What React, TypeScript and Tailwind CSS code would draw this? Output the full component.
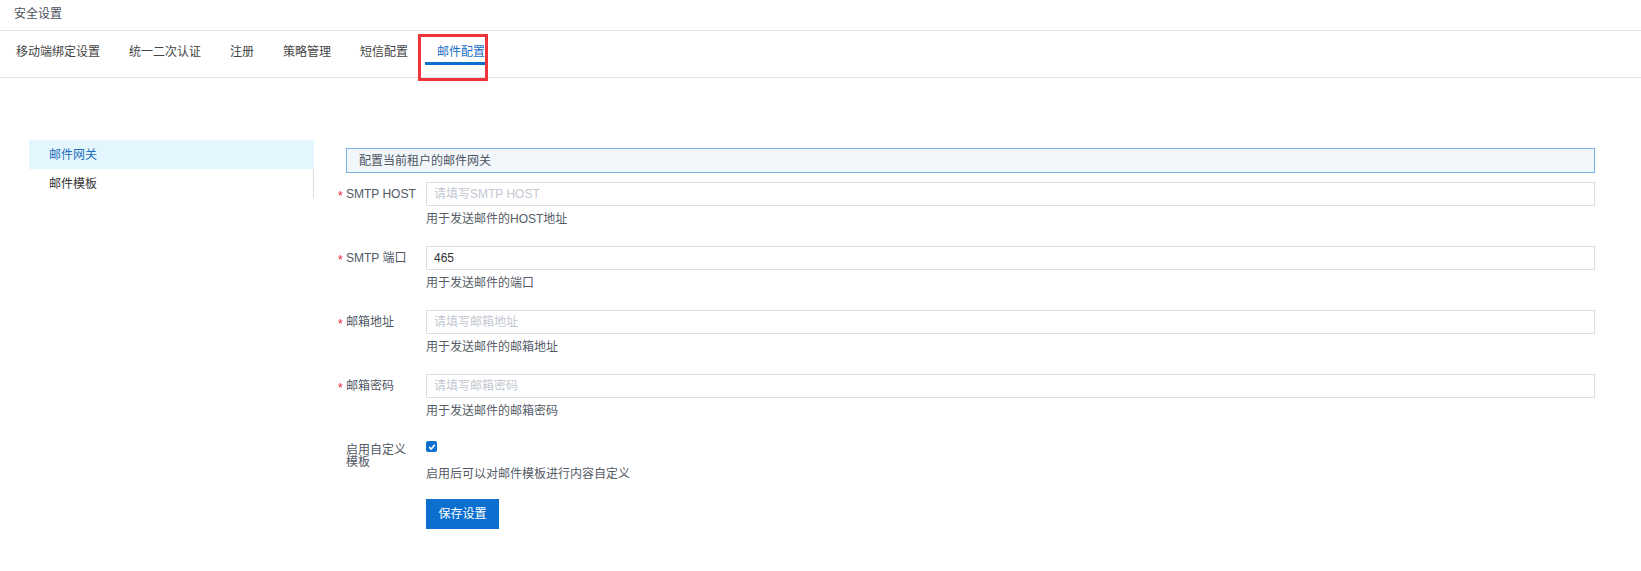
import { useState } from 'react';

const tabs = ['移动端绑定设置', '统一二次认证', '注册', '策略管理', '短信配置', '邮件配置'];

interface Field {
  label: string;
  placeholder: string;
  value?: string;
  help: string;
}

const fields: Field[] = [
  { label: 'SMTP HOST', placeholder: '请填写SMTP HOST', help: '用于发送邮件的HOST地址' },
  { label: 'SMTP 端口', placeholder: '', value: '465', help: '用于发送邮件的端口' },
  { label: '邮箱地址', placeholder: '请填写邮箱地址', help: '用于发送邮件的邮箱地址' },
  { label: '邮箱密码', placeholder: '请填写邮箱密码', help: '用于发送邮件的邮箱密码' },
];

function FormRow({ field }: { field: Field }) {
  return (
    <div className="flex">
      {/* label column with required mark */}
      <div className="w-[88px] shrink-0 flex items-center h-[24px]">
        <span className="w-[8px] text-[#f5222d] text-[12px] leading-none pt-[3px]">*</span>
        <span className="text-[#505763]">{field.label}</span>
      </div>
      <div className="flex-1">
        <input
          className="block w-full h-[24px] border border-[#d9dde6] px-[7px] text-[12px] text-[#333] placeholder:text-[#c3c8d1] outline-none"
          placeholder={field.placeholder}
          defaultValue={field.value}
        />
        <div className="mt-[4px] h-[18px] leading-[18px] text-[#555b66]">{field.help}</div>
      </div>
    </div>
  );
}

export default function App() {
  const [active] = useState(5);
  const [custom, setCustom] = useState(true);

  return (
    <div
      className="w-[1641px] h-[571px] bg-white text-[12px] overflow-hidden"
      style={{ fontFamily: '"Liberation Sans", Arial, "Noto Sans CJK SC", sans-serif' }}
    >
      {/* Page title */}
      <div className="h-[31px] border-b border-[#e5e5e5] pl-[14px] flex items-center pb-[2px] text-[#4b5160]">
        安全设置
      </div>

      {/* Tabs */}
      <div className="h-[47px] border-b border-[#e2e2e2] pl-[16px] pt-[13px] flex items-start gap-[29px]">
        {tabs.map((t, i) => (
          <div key={t} className="relative leading-[16px]">
            <span className={i === active ? 'text-[#1a6fc6]' : 'text-[#444]'}>{t}</span>
            {i === active && (
              <>
                <div className="absolute top-[18px] -left-[12px] -right-[2px] h-[3px] bg-[#0b6fcf]" />
                <div className="absolute -top-[10px] -left-[19px] w-[70px] h-[47px] border-[3px] border-[#f0343a]" />
              </>
            )}
          </div>
        ))}
      </div>

      {/* Body */}
      <div className="flex pl-[29px] pr-[46px] pt-[62px]">
        {/* Left menu */}
        <div className="w-[285px] shrink-0">
          <div className="h-[29px] pl-[20px] flex items-center bg-[#e3f5fd] text-[#1f6fc0]">邮件网关</div>
          <div className="h-[29px] pl-[20px] flex items-center border-r border-[#dcdcdc] text-[#333]">邮件模板</div>
        </div>

        {/* Right form */}
        <div className="flex-1 ml-[24px] pt-[8px]">
          <div className="ml-[8px] h-[25px] border border-[#78b2e6] bg-[#f1f6fb] pl-[12px] flex items-center text-[#4f5560]">
            配置当前租户的邮件网关
          </div>

          <div className="mt-[9px] flex flex-col gap-[18px]">
            {fields.map((f) => (
              <FormRow key={f.label} field={f} />
            ))}

            <div className="flex mt-[3px]">
              <div className="w-[88px] shrink-0 pl-[8px] pt-[3px]">
                <div className="w-[64px] leading-[12px] text-[#505763]">启用自定义模板</div>
              </div>
              <div className="flex-1">
                <div className="h-[24px]">
                  <button
                    onClick={() => setCustom(!custom)}
                    className={`w-[11px] h-[11px] rounded-[2px] flex items-center justify-center ${
                      custom ? 'bg-[#0b6fcf]' : 'border border-[#ccc]'
                    }`}
                  >
                    {custom && (
                      <svg width="8" height="8" viewBox="0 0 8 8">
                        <path d="M1.2 4.2 L3.2 6 L6.8 1.8" fill="none" stroke="white" strokeWidth="1.6" />
                      </svg>
                    )}
                  </button>
                </div>
                <div className="h-[18px] leading-[18px] text-[#555b66]">启用后可以对邮件模板进行内容自定义</div>
                <button className="mt-[16px] w-[73px] h-[30px] bg-[#0b6fcf] text-white text-[12px]">保存设置</button>
              </div>
            </div>
          </div>
        </div>
      </div>
    </div>
  );
}
